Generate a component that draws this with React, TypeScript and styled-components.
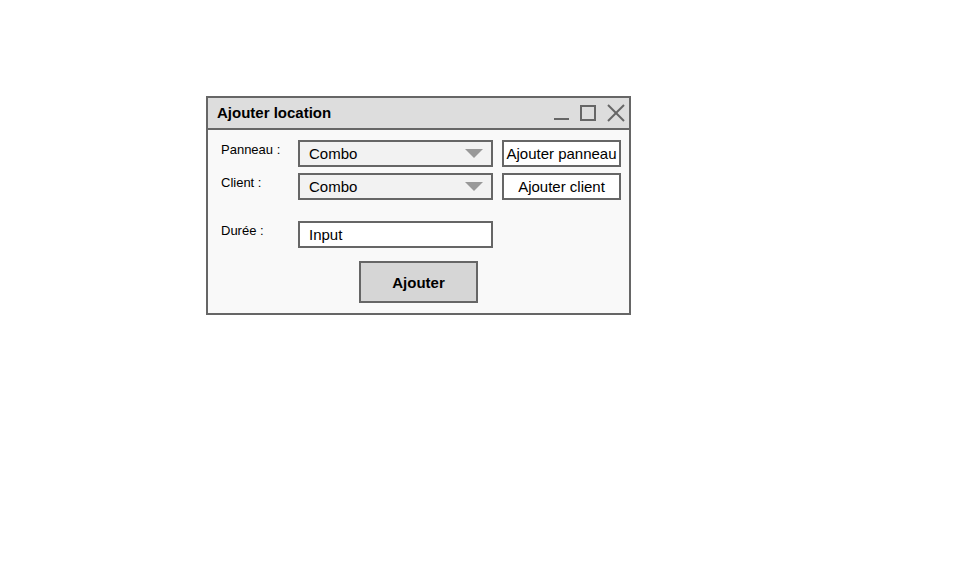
import React from "react";
import styled, { createGlobalStyle } from "styled-components";

const Global = createGlobalStyle`
  html, body { margin: 0; padding: 0; background: #ffffff; }
  body { font-family: "Liberation Sans", Arial, Helvetica, sans-serif; color: #000; }
`;

const Page = styled.div`
  padding: 96px 0 0 206px;
`;

const Window = styled.div`
  width: 425px;
  height: 219px;
  box-sizing: border-box;
  border: 2px solid #666666;
  background: #f9f9f9;
  display: flex;
  flex-direction: column;
`;

const TitleBar = styled.div`
  height: 32px;
  box-sizing: border-box;
  border-bottom: 2px solid #666666;
  background: #dddddd;
  display: flex;
  align-items: center;
  padding: 0 4px 0 9px;
`;

const Title = styled.div`
  flex: 1;
  font-size: 15px;
  font-weight: bold;
  line-height: 18px;
`;

const Controls = styled.div`
  display: flex;
  align-items: center;
  gap: 11px;
`;

const Icon = styled.svg`
  display: block;
`;

const Body = styled.div`
  display: flex;
  flex-direction: column;
  padding: 10px 8px 0 13px;
`;

const Row = styled.div<{ $gap?: number }>`
  display: grid;
  grid-template-columns: 68px 195px 119px;
  column-gap: 9px;
  margin-top: ${(p) => p.$gap ?? 0}px;
`;

const Label = styled.div<{ $pad?: number }>`
  font-size: 13px;
  line-height: 15px;
  padding-top: ${(p) => p.$pad ?? 2}px;
`;

const Combo = styled.div`
  height: 27px;
  box-sizing: border-box;
  border: 2px solid #666666;
  background: #f2f2f2;
  display: flex;
  align-items: center;
  justify-content: space-between;
  padding: 0 8px 0 9px;
  font-size: 15px;
`;

const Input = styled.div`
  height: 27px;
  box-sizing: border-box;
  border: 2px solid #666666;
  background: #ffffff;
  display: flex;
  align-items: center;
  padding: 0 9px;
  font-size: 15px;
`;

const SideButton = styled.div`
  height: 27px;
  box-sizing: border-box;
  border: 2px solid #666666;
  background: #ffffff;
  display: flex;
  align-items: center;
  justify-content: center;
  font-size: 15px;
  white-space: nowrap;
`;

const Footer = styled.div`
  display: flex;
  padding-left: 138px;
  margin-top: 13px;
`;

const MainButton = styled.div`
  width: 119px;
  height: 42px;
  box-sizing: border-box;
  border: 2px solid #666666;
  background: #d6d6d6;
  display: flex;
  align-items: center;
  justify-content: center;
  font-size: 15px;
  font-weight: bold;
`;

const Arrow = () => (
  <svg width="18" height="9" viewBox="0 0 18 9">
    <polygon points="0,0 18,0 9,9" fill="#999999" />
  </svg>
);

export default function App() {
  return (
    <>
      <Global />
      <Page>
        <Window>
          <TitleBar>
            <Title>Ajouter location</Title>
            <Controls>
              <Icon width="16" height="16" viewBox="0 0 16 16">
                <line x1="1" y1="14" x2="16" y2="14" stroke="#666666" strokeWidth="2" />
              </Icon>
              <Icon width="16" height="16" viewBox="0 0 16 16">
                <rect x="1" y="1" width="14" height="14" fill="none" stroke="#666666" strokeWidth="2" />
              </Icon>
              <Icon width="18" height="18" viewBox="0 0 18 18">
                <line x1="1" y1="1" x2="17" y2="17" stroke="#666666" strokeWidth="2" />
                <line x1="17" y1="1" x2="1" y2="17" stroke="#666666" strokeWidth="2" />
              </Icon>
            </Controls>
          </TitleBar>
          <Body>
            <Row>
              <Label>Panneau :</Label>
              <Combo>
                <span>Combo</span>
                <Arrow />
              </Combo>
              <SideButton>Ajouter panneau</SideButton>
            </Row>
            <Row $gap={6}>
              <Label>Client :</Label>
              <Combo>
                <span>Combo</span>
                <Arrow />
              </Combo>
              <SideButton>Ajouter client</SideButton>
            </Row>
            <Row $gap={21}>
              <Label>Durée :</Label>
              <Input>Input</Input>
            </Row>
            <Footer>
              <MainButton>Ajouter</MainButton>
            </Footer>
          </Body>
        </Window>
      </Page>
    </>
  );
}
